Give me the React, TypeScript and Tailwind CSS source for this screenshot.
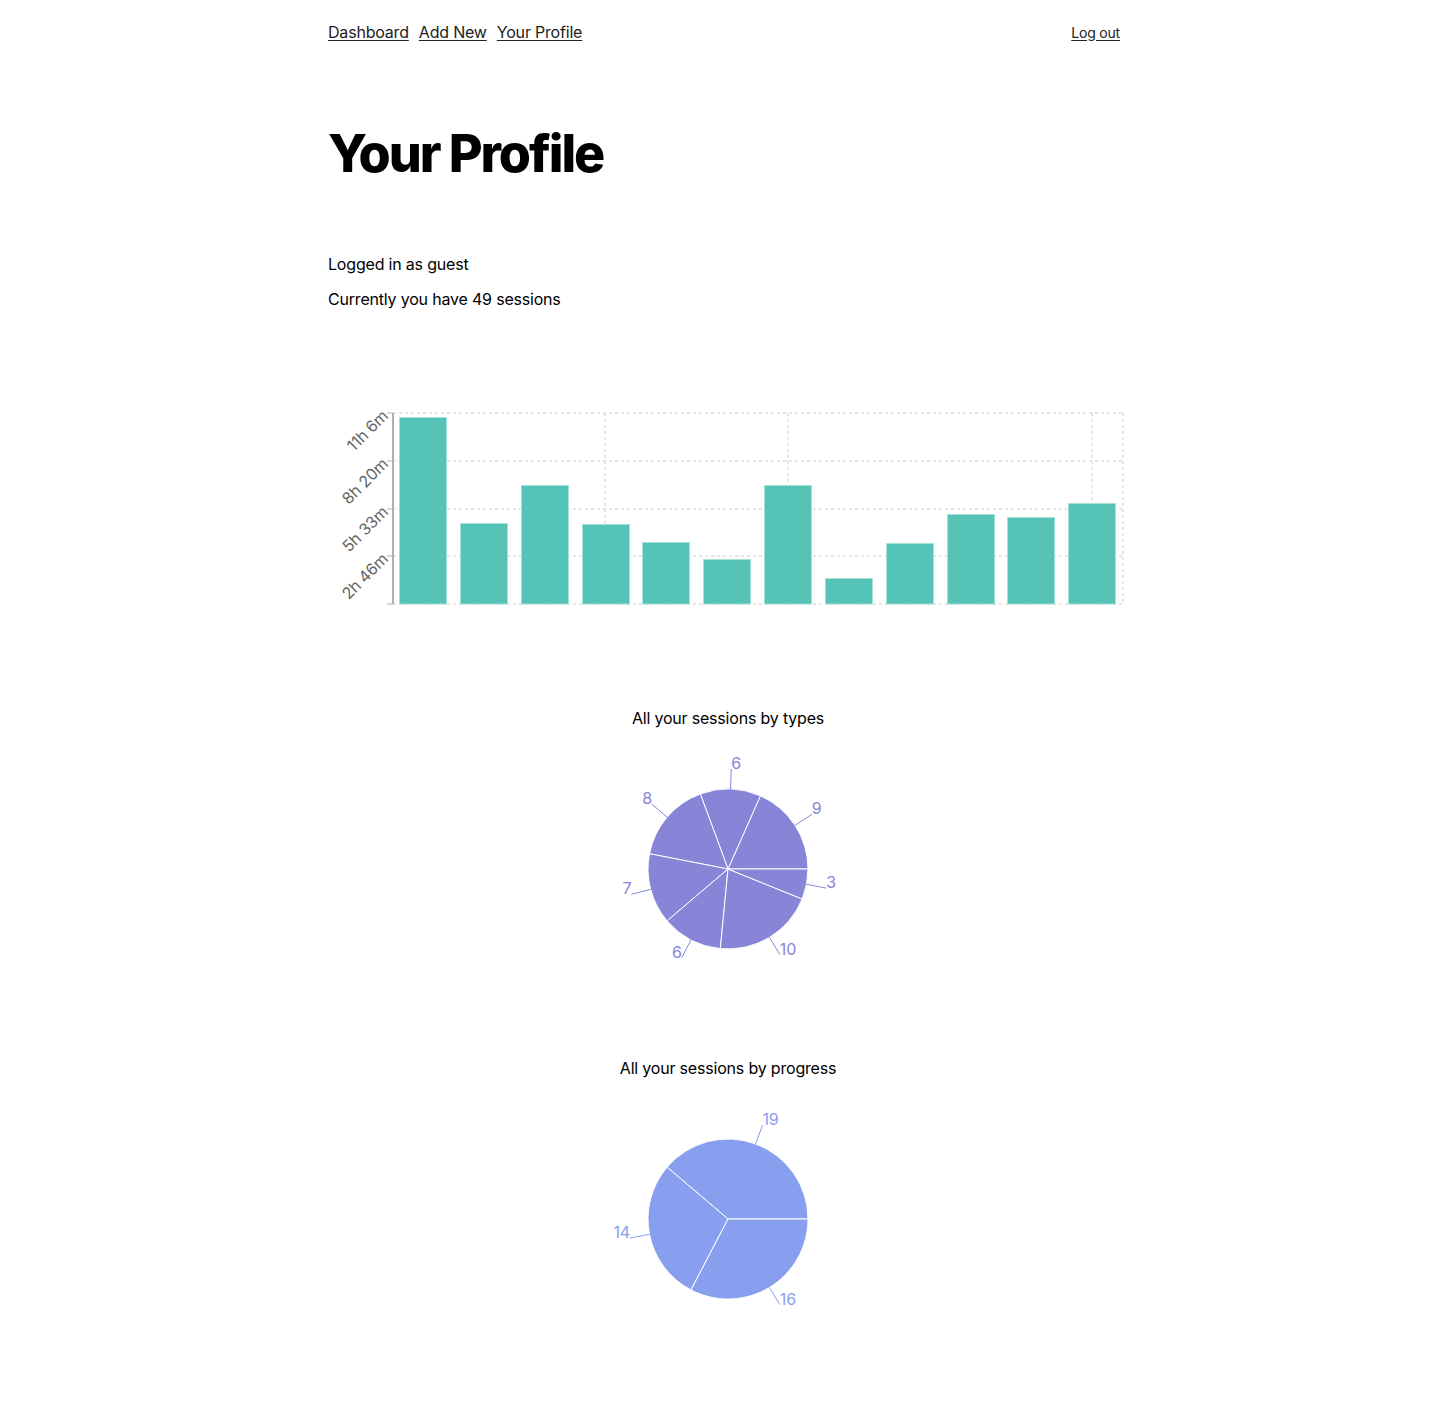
import React from "react";

const FONT = { fontFamily: "Inter, 'Liberation Sans', sans-serif" };

const bars = [417, 523, 485, 524, 542, 559, 485, 578, 543, 514, 517, 503];
const barXs = [399, 460, 521, 582, 642, 703, 764, 825, 886, 947, 1007, 1068];

function BarChart() {
  const ox = 324;
  const oy = 390;
  const ticks = [
    { y: 604, l: "" },
    { y: 556, l: "2h 46m" },
    { y: 509, l: "5h 33m" },
    { y: 461, l: "8h 20m" },
    { y: 413, l: "11h 6m" },
  ];
  const vlines = [605, 788, 1092, 1123];
  return (
    <svg width={800} height={230} className="block">
      {ticks.map((t) => (
        <line key={t.y} x1={393 - ox} x2={1123 - ox} y1={t.y - oy} y2={t.y - oy} stroke="#ccc" strokeDasharray="3 3" />
      ))}
      {vlines.map((x) => (
        <line key={x} x1={x - ox} x2={x - ox} y1={413 - oy} y2={604 - oy} stroke="#ccc" strokeDasharray="3 3" />
      ))}
      {bars.map((top, i) => (
        <rect key={i} x={barXs[i] - ox + 0.5} y={top - oy + 0.5} width={47} height={604 - top - 0.5} fill="#55c3b5" stroke="#a3e2da" strokeWidth={1} />
      ))}
      <line x1={393 - ox} x2={393 - ox} y1={413 - oy} y2={604 - oy} stroke="#b0b0b0" strokeWidth={2} />
      {ticks.map((t) => (
        <g key={"t" + t.y}>
          <line x1={387 - ox} x2={393 - ox} y1={t.y - oy} y2={t.y - oy} stroke="#b0b0b0" strokeWidth={1} />
          {t.l && (
            <text
              x={385 - ox}
              y={t.y - oy}
              dy="0.355em"
              textAnchor="end"
              fontSize={16}
              fill="#666"
              transform={`rotate(-45, ${385 - ox}, ${t.y - oy})`}
              style={FONT}
              letterSpacing="-0.01em"
            >
              {t.l}
            </text>
          )}
        </g>
      ))}
    </svg>
  );
}

function Pie({ values, color, cy }: { values: number[]; color: string; cy: number }) {
  const cx = 404;
  const r = 80;
  const total = values.reduce((a, b) => a + b, 0);
  let a0 = 0;
  const rad = Math.PI / 180;
  const items = values.map((v) => {
    const a1 = a0 + (v / total) * 360;
    const mid = (a0 + a1) / 2;
    const p0 = [cx + r * Math.cos(a0 * rad), cy - r * Math.sin(a0 * rad)];
    const p1 = [cx + r * Math.cos(a1 * rad), cy - r * Math.sin(a1 * rad)];
    const large = a1 - a0 > 180 ? 1 : 0;
    const d = `M${cx},${cy} L${p0[0]},${p0[1]} A${r},${r} 0 ${large} 0 ${p1[0]},${p1[1]} Z`;
    const m0 = [cx + r * Math.cos(mid * rad), cy - r * Math.sin(mid * rad)];
    const m1 = [cx + (r + 20) * Math.cos(mid * rad), cy - (r + 20) * Math.sin(mid * rad)];
    a0 = a1;
    return { v, d, m0, m1 };
  });
  return (
    <svg width={800} height={260} className="block">
      {items.map((it, i) => (
        <path key={i} d={it.d} fill={color} stroke="#fff" strokeWidth={1} />
      ))}
      {items.map((it, i) => (
        <g key={"l" + i}>
          <path d={`M${it.m0[0]},${it.m0[1]} L${it.m1[0]},${it.m1[1]}`} stroke={color} fill="none" />
          <text
            x={it.m1[0]}
            y={it.m1[1]}
            textAnchor={it.m1[0] > cx ? "start" : "end"}
            fill={color}
            fontSize={16}
            style={FONT}
          >
            {it.v}
          </text>
        </g>
      ))}
    </svg>
  );
}

export default function App() {
  return (
    <div className="w-full bg-white text-black pb-[67px] tracking-[-0.012em]" style={FONT}>
      <div className="mx-auto w-[800px]">
        <nav className="h-16 flex items-center justify-between px-1">
          <div className="flex items-center gap-[10px] text-[16px] text-[#222]">
            <a href="#" className="underline underline-offset-2">Dashboard</a>
            <a href="#" className="underline underline-offset-2">Add New</a>
            <a href="#" className="underline underline-offset-2">Your Profile</a>
          </div>
          <a href="#" className="text-[14px] text-[#222] underline underline-offset-2">Log out</a>
        </nav>
        <h1 className="mt-16 px-1 text-[52px] leading-none font-extrabold tracking-[-0.04em]">Your Profile</h1>
        <div className="mt-[72px] px-1 flex flex-col gap-[11px] text-[16px] leading-6">
          <p>Logged in as guest</p>
          <p>Currently you have 49 sessions</p>
        </div>
        <div className="mt-[79px]">
          <BarChart />
        </div>
        <h2 className="mt-[86px] text-center text-[16px] leading-6 pl-2">All your sessions by types</h2>
        <div className="mt-[10px]">
          <Pie values={[9, 6, 8, 7, 6, 10, 3]} color="#8884d8" cy={129} />
        </div>
        <h2 className="mt-[56px] text-center text-[16px] leading-6 pl-2">All your sessions by progress</h2>
        <div className="mt-[10px]">
          <Pie values={[19, 14, 16]} color="#889eee" cy={129} />
        </div>
      </div>
    </div>
  );
}
